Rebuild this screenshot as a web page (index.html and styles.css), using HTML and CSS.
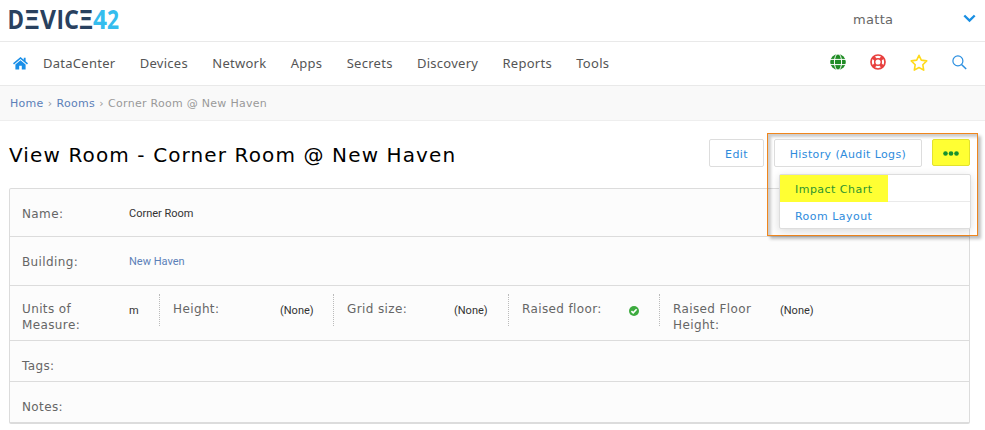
FILE: index.html
```html
<!DOCTYPE html>
<html lang="en">
<head>
<meta charset="utf-8">
<title>View Room - Corner Room @ New Haven</title>
<link rel="stylesheet" href="styles.css">
</head>
<body>
<header class="top">
  <svg class="logo" width="118" height="36" viewBox="0 0 118 36" role="img" aria-label="Device42">
    <g class="brand">
      <text x="-1.5" y="26" textLength="16.5" lengthAdjust="spacingAndGlyphs">D</text>
      <text x="15.5" y="26" textLength="15" lengthAdjust="spacingAndGlyphs">Ξ</text>
      <text x="31" y="26" textLength="16" lengthAdjust="spacingAndGlyphs">V</text>
      <text x="47.6" y="26" textLength="7.5" lengthAdjust="spacingAndGlyphs">I</text>
      <text x="55" y="26" textLength="15" lengthAdjust="spacingAndGlyphs">C</text>
      <text x="70" y="26" textLength="14" lengthAdjust="spacingAndGlyphs">Ξ</text>
    </g>
    <g class="brand accent">
      <text x="84" y="26" textLength="14" lengthAdjust="spacingAndGlyphs">4</text>
      <text x="98" y="26" textLength="12" lengthAdjust="spacingAndGlyphs">2</text>
    </g>
  </svg>
  <div class="user"><span>matta</span>
    <svg width="13" height="9" viewBox="0 0 13 9"><path d="M1.3 1.5 6.5 6.5 11.7 1.5" fill="none" stroke="#1a8fe3" stroke-width="2.4"/></svg>
  </div>
</header>
<nav class="nav">
  <svg class="home" width="15" height="13" viewBox="0 0 15 13" fill="#1a8fe8"><path d="M7.5 0 0 6.3l1 1.1 6.5-5.4L14 7.4l1-1.1-2.4-2V.8h-1.8v2Z"/><path d="M7.5 3.2 2.4 7.4V12.5H6.2V8.8h2.6v3.7h3.8V7.4Z"/></svg>
  <div class="menu"><a>DataCenter</a><a>Devices</a><a>Network</a><a>Apps</a><a>Secrets</a><a>Discovery</a><a>Reports</a><a>Tools</a></div>
  <div class="tools">
    <svg width="16" height="16" viewBox="0 0 16 16"><circle cx="8" cy="8" r="7.8" fill="#1f8c24"/><g fill="none" stroke="#fff" stroke-width="1"><ellipse cx="8" cy="8" rx="3.6" ry="8.2"/><path d="M0 5.4h16M0 10.6h16"/></g></svg>
    <svg width="16" height="16" viewBox="0 0 16 16" fill="none" stroke="#e8403e"><circle cx="8" cy="8" r="7" stroke-width="1.7"/><circle cx="8" cy="8" r="3.3" stroke-width="1.5"/><path d="m2.8 2.8 2.7 2.7m5 5 2.7 2.7m0-10.4-2.7 2.7m-5 5-2.7 2.7" stroke-width="3.2"/></svg>
    <svg width="18" height="17" viewBox="0 0 18 17"><path d="m9 1.3 2.3 4.8 5.4.8-3.9 3.8.9 5.4L9 13.5l-4.7 2.6.9-5.4-3.9-3.8 5.4-.8Z" fill="none" stroke="#ffda1a" stroke-width="1.6" stroke-linejoin="round"/></svg>
    <svg width="15" height="15" viewBox="0 0 15 15" fill="none" stroke="#2b8fe0"><circle cx="5.9" cy="5.9" r="5" stroke-width="1.2"/><path d="m9.5 9.5 4.7 4.5" stroke-width="1.5"/></svg>
  </div>
</nav>
<div class="crumbs"><a>Home</a><i>›</i><a>Rooms</a><i>›</i><span>Corner Room @ New Haven</span></div>
<main>
  <div class="heading">
    <h1>View Room - Corner Room @ New Haven</h1>
    <div class="actions">
      <a class="btn edit">Edit</a>
      <div class="callout">
        <div class="pair"><a class="btn history">History (Audit Logs)</a><a class="btn more"><svg width="16" height="5" viewBox="0 0 16 5" fill="#16902f"><circle cx="2.5" cy="2.5" r="2.3"/><circle cx="8" cy="2.5" r="2.3"/><circle cx="13.5" cy="2.5" r="2.3"/></svg></a></div>
        <div class="dropdown"><a class="marked"><span>Impact Chart</span></a><a><span>Room Layout</span></a></div>
      </div>
    </div>
  </div>
  <section class="card">
    <div class="row name"><label>Name:</label><b>Corner Room</b></div>
    <div class="row building"><label>Building:</label><b class="link">New Haven</b></div>
    <div class="row specs">
      <div class="cell units"><label>Units of Measure:</label><b>m</b></div>
      <div class="cell height"><label>Height:</label><b>(None)</b></div>
      <div class="cell grid"><label>Grid size:</label><b>(None)</b></div>
      <div class="cell floor"><label>Raised floor:</label><svg width="10" height="10" viewBox="0 0 10 10"><circle cx="5" cy="5" r="5" fill="#3dab3f"/><path d="m2.4 5.1 1.8 1.8 3.4-3.7" fill="none" stroke="#fff" stroke-width="1.6"/></svg></div>
      <div class="cell raised"><label>Raised Floor Height:</label><b>(None)</b></div>
    </div>
    <div class="row tags"><label>Tags:</label></div>
    <div class="row notes"><label>Notes:</label></div>
  </section>
</main>
</body>
</html>
```

FILE: styles.css
```css
* { box-sizing: border-box; }
body { margin: 0; height: 430px; overflow: hidden; background: #fff; font-family: "DejaVu Sans", sans-serif; font-size: 12px; color: #666; }
svg { display: block; flex: none; }
.top { height: 42px; border-bottom: 1px solid #e9e9e9; display: flex; justify-content: space-between; padding: 3px 9px 0 9px; }
.logo { overflow: visible; }
.brand { font: bold 26px "Open Sans", sans-serif; fill: #29415f; }
.accent { fill: #35bdee; }
.user { width: 123px; height: 22px; margin-top: 5px; display: flex; justify-content: space-between; align-items: center; font: 13px "DejaVu Sans", sans-serif; letter-spacing: .3px; }
.user svg { margin-top: -2px; }
.nav { height: 44px; border-bottom: 1px solid #e9e9e9; display: flex; align-items: center; padding-left: 13px; }
.menu { display: flex; gap: 24.3px; margin: -2px 0 0 15px; font: 13px "Noto Sans", sans-serif; letter-spacing: .27px; color: #555; }
.tools { display: flex; align-items: center; margin-left: auto; padding: 0 18px 3px 0; gap: 24px; }
.crumbs { height: 35px; background: #f9f9f9; border-bottom: 1px solid #eee; display: flex; align-items: center; padding-left: 10px; font-size: 11px; letter-spacing: .28px; color: #999; }
.crumbs a { color: #5b80b8; }
.crumbs i { font-style: normal; width: 13px; text-align: center; }
main { padding: 0 15px 0 9px; }
.heading { height: 67px; display: flex; justify-content: space-between; }
h1 { margin: 20px 0 0; font: 20px/28px "DejaVu Sans", sans-serif; letter-spacing: 1.12px; color: #000; white-space: nowrap; }
.actions { display: flex; position: relative; z-index: 2; margin-right: -8px; }
.btn { height: 28px; border: 1px solid #ddd; border-radius: 2px; background: #fff; color: #2e8bdc; display: flex; align-items: center; justify-content: center; font-size: 11px; letter-spacing: .38px; padding-top: 2px; }
.edit { width: 55px; margin: 18px 3px 0 0; }
.callout { width: 211px; height: 103px; margin-top: 12px; border: 1px solid #f0861c; padding: 5px 7px 0 6px; box-shadow: 3px 3px 3px rgba(0,0,0,.25), inset 3px 3px 3px rgba(0,0,0,.2); }
.pair { display: flex; justify-content: space-between; }
.history { width: 148px; }
.more { width: 38px; height: 27px; background: #ff3; border-color: #e2e22e; padding-top: 1px; }
.dropdown { width: 192px; height: 55px; margin: 7px 0 0 5px; border: 1px solid #ddd; border-radius: 2px; background: #fff; box-shadow: 0 2px 8px rgba(0,0,0,.13); color: #2e8bdc; font-size: 11px; letter-spacing: .47px; }
.dropdown a { display: flex; height: 28px; align-items: center; }
.dropdown span { padding-left: 15px; }
.dropdown .marked { height: 27px; border-bottom: 1px solid #eaeaea; }
.marked span { width: 108px; height: 27px; line-height: 29px; background: #ff3; color: #2d9430; margin-bottom: -1px; }
.card { height: 236px; border: 1px solid #dcdcdc; border-bottom-width: 2px; border-radius: 2px; background: #fcfcfc; }
.row { display: flex; border-bottom: 1px solid #dcdcdc; padding-left: 12px; }
label { width: 107px; font-size: 12px; line-height: 16px; letter-spacing: .38px; flex: none; }
b { font: 11px/16px Roboto, sans-serif; color: #333; }
b.link { color: #5b80b8; }
.name { height: 48px; padding-top: 17px; }
.building { height: 49px; padding-top: 17px; }
.specs { height: 55px; padding-top: 8px; }
.cell { display: flex; height: 32px; border-right: 1px dotted #bbb; padding-top: 7px; }
.cell b { margin-top: 2px; }
.cell svg { margin: 5px 0 0; }
.cell label { width: 107px; }
.cell.units { width: 138px; }
.cell.units label { padding-right: 30px; }
.cell.height { width: 174px; padding-left: 13px; }
.cell.grid { width: 175px; padding-left: 13px; }
.cell.floor { width: 151px; padding-left: 13px; }
.cell.raised { border: 0; padding-left: 13px; }
.tags { height: 41px; padding-top: 17px; }
.notes { border: 0; padding-top: 17px; }
```
